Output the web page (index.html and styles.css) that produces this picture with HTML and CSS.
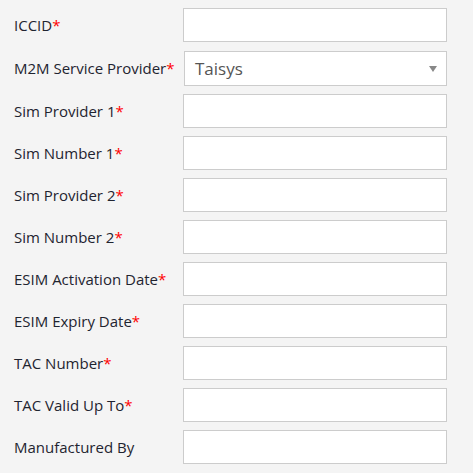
FILE: index.html
```html
<!DOCTYPE html>
<html>
<head>
<meta charset="utf-8">
<link rel="stylesheet" href="styles.css">
</head>
<body>
<form class="form">
  <div class="row"><label class="label">ICCID<span class="req">*</span></label><input class="field" type="text"></div>
  <div class="row row-select"><label class="label">M2M Service Provider<span class="req">*</span></label>
    <div class="select"><span class="select-text">Taisys</span><span class="arrow"></span></div></div>
  <div class="row"><label class="label">Sim Provider 1<span class="req">*</span></label><input class="field" type="text"></div>
  <div class="row"><label class="label">Sim Number 1<span class="req">*</span></label><input class="field" type="text"></div>
  <div class="row"><label class="label">Sim Provider 2<span class="req">*</span></label><input class="field" type="text"></div>
  <div class="row"><label class="label">Sim Number 2<span class="req">*</span></label><input class="field" type="text"></div>
  <div class="row"><label class="label">ESIM Activation Date<span class="req">*</span></label><input class="field" type="text"></div>
  <div class="row"><label class="label">ESIM Expiry Date<span class="req">*</span></label><input class="field" type="text"></div>
  <div class="row"><label class="label">TAC Number<span class="req">*</span></label><input class="field" type="text"></div>
  <div class="row"><label class="label">TAC Valid Up To<span class="req">*</span></label><input class="field" type="text"></div>
  <div class="row"><label class="label">Manufactured By</label><input class="field" type="text"></div>
</form>
</body>
</html>
```
FILE: styles.css
```css
html, body {
  margin: 0;
  padding: 0;
  background: #f4f4f4;
}
body {
  font-family: "Open Sans", "Liberation Sans", sans-serif;
  color: #222;
}
.form {
  padding: 8px 0 0 14px;
  display: flex;
  flex-direction: column;
  gap: 8px;
}
.row {
  display: flex;
  align-items: center;
  height: 34px;
}
.row-select {
  height: 36px;
  align-items: flex-end;
}
.label {
  width: 169px;
  font-size: 15px;
  color: #1f2430;
  white-space: nowrap;
}
.row-select .label {
  align-self: center;
}
.req {
  color: #f00;
}
.field {
  box-sizing: border-box;
  width: 264px;
  height: 34px;
  margin: 0;
  border: 1px solid #ccc;
  background: #fff;
  padding: 0 8px;
  font: inherit;
  outline: none;
}
.select {
  box-sizing: border-box;
  width: 263px;
  height: 35px;
  margin-left: 1px;
  border: 1px solid #ccc;
  background: #fff;
  display: flex;
  align-items: center;
  justify-content: space-between;
  padding: 0 9px 0 10px;
}
.select-text {
  font-size: 17px;
  color: #555;
}
.arrow {
  width: 0;
  height: 0;
  border-left: 4px solid transparent;
  border-right: 4px solid transparent;
  border-top: 6px solid #888;
}
```
